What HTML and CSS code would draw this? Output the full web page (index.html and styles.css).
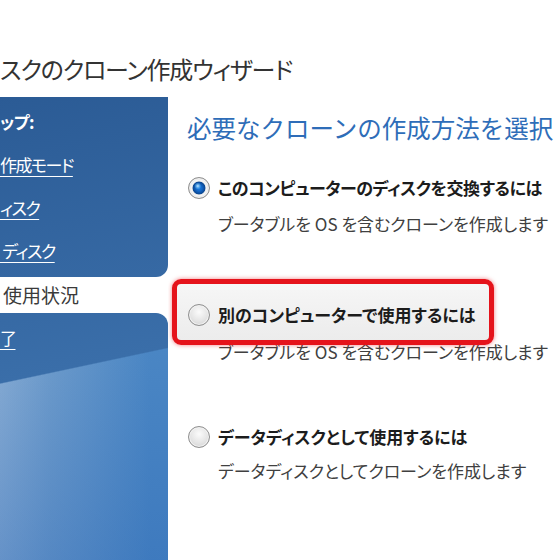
FILE: index.html
```html
<!DOCTYPE html>
<html lang="ja">
<head>
<meta charset="utf-8">
<title>ディスクのクローン作成ウィザード</title>
<link rel="stylesheet" href="styles.css">
</head>
<body>
<div class="window">
  <header class="titlebar">
    <h1 class="title">スクのクローン作成ウィザード</h1>
  </header>
  <div class="main">
    <nav class="sidebar">
      <div class="nav-block nav-top">
        <div class="nav-head">ップ:</div>
        <a class="nav-link">作成モード</a>
        <a class="nav-link">ィスク</a>
        <a class="nav-link">&nbsp;ディスク</a>
      </div>
      <div class="nav-current">使用状況</div>
      <div class="nav-block nav-bottom">
        <a class="nav-link">了</a>
      </div>
    </nav>
    <section class="content">
      <h2 class="heading">必要なクローンの作成方法を選択</h2>

      <div class="option opt-first">
        <span class="radio checked"></span>
        <span class="label">このコンピューターのディスクを交換するには</span>
      </div>
      <p class="desc desc-first">ブータブルを OS を含むクローンを作成します</p>

      <div class="option highlight">
        <span class="radio"></span>
        <span class="label">別のコンピューターで使用するには</span>
      </div>
      <p class="desc desc-covered">ブータブルを OS を含むクローンを作成します</p>

      <div class="option opt-third">
        <span class="radio"></span>
        <span class="label">データディスクとして使用するには</span>
      </div>
      <p class="desc desc-third">データディスクとしてクローンを作成します</p>
    </section>
  </div>
</div>
</body>
</html>
```

FILE: styles.css
```css
html, body {
  margin: 0;
  padding: 0;
  background: #ffffff;
}

body {
  width: 560px;
  height: 560px;
  overflow: hidden;
  font-family: "Noto Sans CJK JP", "Noto Sans", sans-serif;
  font-feature-settings: "palt" 1;
}

.window {
  display: flex;
  flex-direction: column;
  height: 560px;
}

.titlebar {
  height: 97px;
  box-sizing: border-box;
  padding-top: 54px;
}

.title {
  margin: 0;
  font-size: 24px;
  line-height: 30px;
  font-weight: 400;
  letter-spacing: -1.2px;
  color: #333333;
  white-space: nowrap;
}

.main {
  flex: 1;
  display: flex;
  min-height: 0;
}

.sidebar {
  width: 168px;
  flex: none;
  display: flex;
  flex-direction: column;
  background: #ffffff;
}

.nav-block {
  background:
    linear-gradient(168deg, #2b5b95 14%, #3a6ea9 56.4%, rgba(0,0,0,0) 56.6%),
    linear-gradient(180deg, rgba(40,100,180,0) 62%, rgba(40,100,180,0.35) 100%),
    linear-gradient(90deg, #86abd3 0px, #6d9bcb 50px, #4a86c4 150px);
  background-attachment: fixed;
  color: #ffffff;
  display: flex;
  flex-direction: column;
  gap: 19px;
  padding-top: 13px;
  box-sizing: border-box;
}

.nav-top {
  height: 180px;
  border-bottom-right-radius: 12px;
}

.nav-bottom {
  flex: 1;
  border-top-right-radius: 12px;
}

.nav-head {
  font-size: 17px;
  line-height: 24px;
  font-weight: 700;
  letter-spacing: -0.5px;
  white-space: nowrap;
}

.nav-link {
  font-size: 17px;
  line-height: 24px;
  letter-spacing: -1.5px;
  color: #ffffff;
  text-decoration: underline;
  text-decoration-thickness: 1px;
  text-underline-offset: 4px;
  white-space: nowrap;
}

.nav-current {
  height: 36px;
  line-height: 36px;
  font-size: 19px;
  color: #3a3a3a;
  padding-left: 3px;
  background: #ffffff;
  white-space: nowrap;
}

.content {
  flex: 1;
  min-width: 0;
  overflow: hidden;
  padding: 15px 0 0 19px;
  display: flex;
  flex-direction: column;
  align-items: flex-start;
}

.heading {
  margin: 0;
  font-size: 24.5px;
  line-height: 32px;
  font-weight: 400;
  font-feature-settings: normal;
  color: #2e6db8;
  white-space: nowrap;
}

.option {
  display: flex;
  align-items: center;
  gap: 8px;
  margin-left: 1px;
  height: 24px;
}

.label {
  font-size: 17px;
  line-height: 24px;
  font-weight: 700;
  color: #1c1c1c;
  white-space: nowrap;
}

.opt-first .label {
  letter-spacing: -0.45px;
}

.desc {
  margin: 0 0 0 31px;
  font-size: 17px;
  line-height: 24px;
  color: #404040;
  white-space: nowrap;
}

.opt-first { margin-top: 32px; }
.desc-first { margin-top: 12px; }

.highlight {
  position: relative;
  z-index: 1;
  height: auto;
  margin-top: 43px;
  margin-left: -15px;
  padding: 19px 13px 13px 11px;
  border: 5px solid #e5131b;
  border-radius: 9px;
  background: linear-gradient(180deg, #f6f6f6, #ececec);
  box-shadow: 0 0 4px rgba(229, 19, 27, 0.55);
}

.desc-covered { margin-top: -5px; }

.opt-third { margin-top: 61px; }
.desc-third { margin-top: 10px; }

.radio {
  width: 22px;
  height: 22px;
  flex: none;
  box-sizing: border-box;
  border-radius: 50%;
  border: 1px solid #8f8f8f;
  background: radial-gradient(circle at 50% 35%, #fbfbfb 0, #e4e4e4 55%, #cdcdcd 100%);
  box-shadow: inset 0 0 0 1px #f2f2f2;
}

.radio.checked {
  background:
    radial-gradient(circle at 44% 40%, rgba(200,235,255,0.95) 0, rgba(120,200,255,0.5) 2px, rgba(0,0,0,0) 3.5px),
    radial-gradient(circle at 50% 50%, #1e7fe0 0, #1468c8 3px, #0b4c9c 5.5px, #0a4790 6px, #e9e9e9 6.8px, #f7f7f7 7.8px, #d6d6d6 10px);
}
```
